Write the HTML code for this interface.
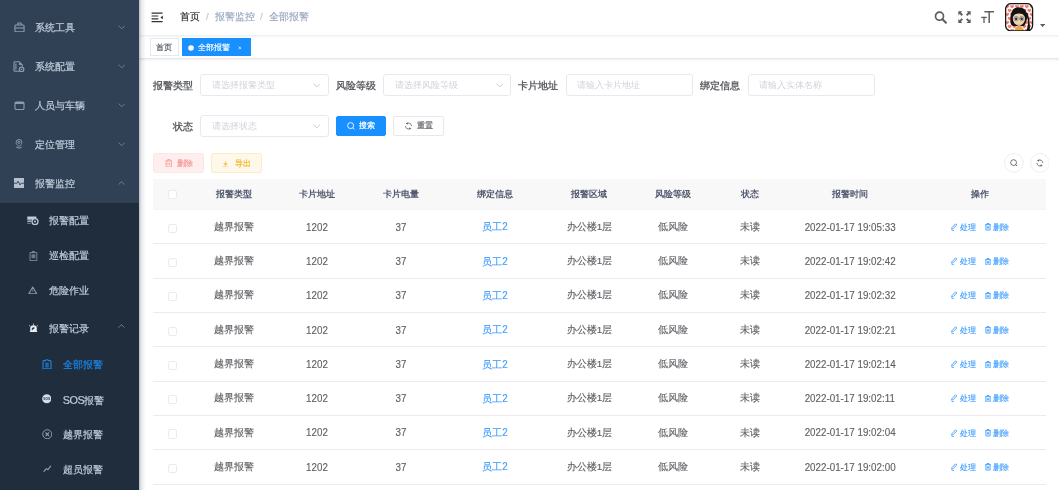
<!DOCTYPE html>
<html><head><meta charset="utf-8">
<style>
*{box-sizing:border-box;margin:0;padding:0}
html,body{width:1059px;height:490px;overflow:hidden;background:#fff;font-family:"Liberation Sans",sans-serif;}
.abs{position:absolute}
#side{position:absolute;left:0;top:0;width:139px;height:490px;background:#304156;overflow:hidden;z-index:5}
#sub{position:absolute;left:0;top:202.6px;width:139px;height:300px;background:#1f2d3d}
.mi{position:absolute;font-size:9.8px;line-height:12px;white-space:nowrap;-webkit-text-stroke:0.2px currentColor}
#shadow{position:absolute;left:139px;top:0;width:7px;height:490px;background:linear-gradient(to right,rgba(0,21,41,.28),rgba(0,21,41,.08) 40%,rgba(0,21,41,0));z-index:6}
#nav{position:absolute;left:139px;top:0;width:920px;height:35px;background:#fff;box-shadow:0 1.2px 2.5px rgba(0,21,41,.09);z-index:2}
.bc{position:absolute;top:11px;font-size:9.8px;line-height:12px;white-space:nowrap;-webkit-text-stroke:0.15px currentColor}
#tags{z-index:1;position:absolute;left:139px;top:35px;width:920px;height:23.8px;background:#fff;border-bottom:1px solid #e4e7ed;box-shadow:0 1px 2px 0 rgba(0,0,0,.08)}
.tag{position:absolute;top:2.8px;height:18px;border:1px solid #e6e9ef;font-size:8.4px;line-height:16px;color:#495060;background:#fff;white-space:nowrap;-webkit-text-stroke:0.15px currentColor}
.tag.act{background:#1890ff;border-color:#1890ff;color:#fff}
.lbl{position:absolute;font-size:9.8px;font-weight:bold;color:#606266;line-height:12px;white-space:nowrap}
.inp{position:absolute;height:22px;border:1px solid #e7e9ee;border-radius:3px;background:#fff}
.ph{position:absolute;left:10.5px;top:5.4px;font-size:9.1px;line-height:11px;color:#cfd2d8;white-space:nowrap}
.btn{position:absolute;height:19.5px;border-radius:2px;font-size:8.4px;line-height:17.5px;white-space:nowrap;border:1px solid;-webkit-text-stroke:0.2px currentColor}
table{position:absolute;left:153.4px;top:179px;border-collapse:collapse;table-layout:fixed;width:892.5px}
td,th{text-align:center;white-space:nowrap;padding:0}
th{height:30.7px;background:#f8f8f9;color:#515a6e;font-size:9px;font-weight:bold;border-bottom:1px solid #f3f4f7}
td{height:34.3px;padding-top:1px;color:#606266;font-size:9.8px;border-bottom:1px solid #ebebef;-webkit-text-stroke:0.15px currentColor}
.cb{display:inline-block;width:9.2px;height:9.2px;border:1px solid #eaebee;border-radius:2px;background:#fff;vertical-align:middle}
.lnk{color:#409eff}
.n{display:inline-block;font-size:10.8px;transform:scaleX(0.907);position:relative;top:-0.7px}
.op{color:#409eff;font-size:8.4px}
body>*{filter:blur(0.3px)}
</style></head><body>
<div id="side">
<div id="sub"></div>
<div class="mi" style="top:21.6px;left:35.2px;color:#bfcbd9">系统工具</div>
<div class="mi" style="top:60.8px;left:35.2px;color:#bfcbd9">系统配置</div>
<div class="mi" style="top:100px;left:35.2px;color:#bfcbd9">人员与车辆</div>
<div class="mi" style="top:139.2px;left:35.2px;color:#bfcbd9">定位管理</div>
<div class="mi" style="top:178.4px;left:35.2px;color:#bfcbd9">报警监控</div>
<div class="mi" style="top:215.3px;left:49.3px;color:#bfcbd9">报警配置</div>
<div class="mi" style="top:250.3px;left:49.3px;color:#bfcbd9">巡检配置</div>
<div class="mi" style="top:285.3px;left:49.3px;color:#bfcbd9">危险作业</div>
<div class="mi" style="top:322.6px;left:49.3px;color:#bfcbd9">报警记录</div>
<div class="mi" style="top:359.4px;left:62.8px;color:#1c84e6">全部报警</div>
<div class="mi" style="top:394.4px;left:62.8px;color:#bfcbd9"><span style="font-size:10.9px;letter-spacing:-0.55px;vertical-align:-0.3px">SOS</span>报警</div>
<div class="mi" style="top:429.4px;left:62.8px;color:#bfcbd9">越界报警</div>
<div class="mi" style="top:464.4px;left:62.8px;color:#bfcbd9">超员报警</div>
<svg class="abs" style="left:13.5px;top:21.5px" width="11" height="10.5" viewBox="0 0 11 10.5" ><g fill="none" stroke="#8f9bad" stroke-width="1.1"><path d="M3.8 3V1.6Q3.8 1 4.4 1H6.6Q7.2 1 7.2 1.6V3"/><rect x="0.9" y="3" width="9.2" height="6.7" rx="1"/><path d="M0.9 6H10.1"/></g></svg>
<svg class="abs" style="left:13px;top:60.5px" width="11.5" height="11" viewBox="0 0 11.5 11" ><g fill="none" stroke="#8f9bad" stroke-width="1.1"><path d="M6.8 10.3H2Q1 10.3 1 9.3V1.7Q1 0.8 2 0.8H6.2L9.3 3.9V5.5"/><path d="M2.9 2.5V8.7"/></g><path d="M6.2 0.8L9.3 3.9H6.2Z" fill="#8f9bad"/><circle cx="8.6" cy="8.4" r="2.2" fill="none" stroke="#8f9bad" stroke-width="1.3"/><circle cx="8.6" cy="8.4" r="0.7" fill="#8f9bad"/></svg>
<svg class="abs" style="left:13.5px;top:100.7px" width="11" height="9.5" viewBox="0 0 11 9.5" ><rect x="1" y="1" width="9" height="7.6" rx="1.3" fill="none" stroke="#8f9bad" stroke-width="1.1"/><rect x="1" y="1" width="9" height="2" fill="#8f9bad"/></svg>
<svg class="abs" style="left:15px;top:139.2px" width="8" height="10" viewBox="0 0 8 10" ><g fill="none" stroke="#8f9bad" stroke-width="1"><path d="M4 7.6C2.4 6 1.1 4.9 1.1 3.4A2.9 2.9 0 0 1 6.9 3.4C6.9 4.9 5.6 6 4 7.6Z"/><circle cx="4" cy="3.4" r="1"/><path d="M1.3 7.6Q1 9 4 9Q7 9 6.7 7.6"/></g></svg>
<svg class="abs" style="left:13.9px;top:178.4px" width="10" height="10" viewBox="0 0 10 10" ><rect x="0" y="0" width="10" height="10" fill="#b6bfcc"/><path d="M0 5.2H3L4.2 3.2L6 7L7.2 5.2H10" fill="none" stroke="#304156" stroke-width="0.9"/></svg>
<svg class="abs" style="left:27.2px;top:215.5px" width="11.5" height="9.5" viewBox="0 0 11.5 9.5" ><rect x="0.3" y="0.5" width="9" height="3.2" fill="#bfcbd9"/><rect x="0.3" y="4.5" width="4" height="1.3" fill="#bfcbd9"/><rect x="0.3" y="6.8" width="3.5" height="1" fill="#bfcbd9" opacity=".6"/><circle cx="8" cy="5.6" r="3" fill="#1f2d3d" stroke="#bfcbd9" stroke-width="1.3"/><circle cx="8" cy="5.6" r="1" fill="#bfcbd9"/></svg>
<svg class="abs" style="left:28.5px;top:249.5px" width="9" height="11.5" viewBox="0 0 9 11.5" ><path d="M1 2.6H7.8V10.6H1Z" fill="none" stroke="#8f9bad" stroke-width="1" opacity=".8"/><path d="M2.7 2.6Q2.7 0.8 4.4 0.8Q6.1 0.8 6.1 2.6Z" fill="#8f9bad" opacity=".8"/><rect x="2.5" y="4.3" width="3.8" height="4" rx="1" fill="#8f9bad" opacity=".7"/></svg>
<svg class="abs" style="left:28px;top:285.8px" width="9.5" height="8.5" viewBox="0 0 9.5 8.5" ><path d="M4.75 1L8.7 7.7H0.8Z" fill="none" stroke="#8f9bad" stroke-width="1.1" stroke-linejoin="round"/><path d="M4.75 3.6V5.6" stroke="#8f9bad" stroke-width="0.8"/></svg>
<svg class="abs" style="left:28.5px;top:322.8px" width="9" height="9.5" viewBox="0 0 9 9.5" ><path d="M1 3.5L0.3 2.2M8 3.5L8.7 2.2M4.5 2.2V0.6" stroke="#bfcbd9" stroke-width="0.9"/><path d="M1.2 9V5.5A3.3 3.3 0 0 1 7.8 5.5V9Z" fill="#e8edf3"/><path d="M3 7.2V5.6A1.6 1.6 0 0 1 5.8 5" fill="#1f2d3d" stroke="#1f2d3d" stroke-width=".3"/><rect x="0.8" y="8.2" width="7.4" height="1.2" fill="#e8edf3"/></svg>
<svg class="abs" style="left:41.5px;top:358.5px" width="10" height="10.5" viewBox="0 0 10 10.5" ><path d="M1 2.4Q1 1.6 1.8 1.6H3.4Q3.6 0.7 5 0.7Q6.4 0.7 6.6 1.6H8.2Q9 1.6 9 2.4V9.8H1Z" fill="none" stroke="#1c84e6" stroke-width="1.1"/><rect x="3.3" y="3.8" width="3.4" height="4.5" fill="#1c84e6" opacity=".9"/><path d="M3.3 5.3H6.7M3.3 6.8H6.7" stroke="#1f2d3d" stroke-width=".45"/></svg>
<svg class="abs" style="left:41.8px;top:394.2px" width="9.5" height="9.5" viewBox="0 0 9.5 9.5" ><circle cx="4.75" cy="4.75" r="4.6" fill="#d4dde8"/><text x="4.75" y="5.9" font-size="3.3" font-weight="bold" text-anchor="middle" fill="#1f2d3d" font-family="Liberation Sans">SOS</text></svg>
<svg class="abs" style="left:41.5px;top:428.8px" width="10.5" height="10.5" viewBox="0 0 10.5 10.5" ><circle cx="5.25" cy="5.25" r="4.5" fill="none" stroke="#8f9bad" stroke-width="1"/><path d="M3.5 3.5L7 7M7 3.5L3.5 7" stroke="#8f9bad" stroke-width="1.1"/></svg>
<svg class="abs" style="left:42.5px;top:464.8px" width="9" height="7.5" viewBox="0 0 9 7.5" ><path d="M1 6.3L3.3 3.7L5 4.6L7.6 1.2" fill="none" stroke="#8f9bad" stroke-width="1.2" stroke-linecap="round" stroke-linejoin="round"/></svg>
<svg class="abs" style="left:117.5px;top:24.6px" width="7.5" height="4.8" viewBox="0 0 7.5 4.8" ><path d="M0.6 0.6L3.75 3.8L6.9 0.6" fill="none" stroke="#6f7c90" stroke-width="1"/></svg>
<svg class="abs" style="left:117.5px;top:63.8px" width="7.5" height="4.8" viewBox="0 0 7.5 4.8" ><path d="M0.6 0.6L3.75 3.8L6.9 0.6" fill="none" stroke="#6f7c90" stroke-width="1"/></svg>
<svg class="abs" style="left:117.5px;top:103px" width="7.5" height="4.8" viewBox="0 0 7.5 4.8" ><path d="M0.6 0.6L3.75 3.8L6.9 0.6" fill="none" stroke="#6f7c90" stroke-width="1"/></svg>
<svg class="abs" style="left:117.5px;top:142.2px" width="7.5" height="4.8" viewBox="0 0 7.5 4.8" ><path d="M0.6 0.6L3.75 3.8L6.9 0.6" fill="none" stroke="#6f7c90" stroke-width="1"/></svg>
<svg class="abs" style="left:118px;top:180.5px" width="7" height="4.6" viewBox="0 0 7 4.6" ><path d="M0.6 3.6L3.5 0.6L6.4 3.6" fill="none" stroke="#6f7c90" stroke-width="1"/></svg>
<svg class="abs" style="left:118px;top:324.3px" width="7" height="4.6" viewBox="0 0 7 4.6" ><path d="M0.6 3.6L3.5 0.6L6.4 3.6" fill="none" stroke="#6f7c90" stroke-width="1"/></svg>
</div>
<div id="shadow"></div>
<div id="nav">
  <div class="bc" style="left:40.7px;color:#303133">首页</div>
  <div class="bc" style="left:67px;color:#c0c4cc">/</div>
  <div class="bc" style="left:75.7px;color:#97a8be">报警监控</div>
  <div class="bc" style="left:121px;color:#c0c4cc">/</div>
  <div class="bc" style="left:130px;color:#97a8be">全部报警</div>
</div>
<div id="tags">
  <div class="tag" style="left:11px;width:29.2px;padding-left:5px">首页</div>
  <div class="tag act" style="left:43.4px;width:69px;padding-left:15px">全部报警</div>
</div>
<div style="position:absolute;left:0;top:0;width:1059px;height:60px;z-index:3"><svg class="abs" style="left:151px;top:11.5px" width="12.5" height="11" viewBox="0 0 12.5 11" ><g stroke="#303133" stroke-width="1.2"><path d="M0.6 1.2H11.6M0.6 4H7.3M0.6 6.8H7.3M0.6 9.7H11.6"/></g><path d="M11.8 3.5V7.3L9.4 5.4Z" fill="#303133"/></svg>
<svg class="abs" style="left:933.5px;top:11.2px" width="13" height="13" viewBox="0 0 13 13" ><circle cx="5.5" cy="5.2" r="4" fill="none" stroke="#5a5e66" stroke-width="1.7"/><path d="M8.5 8.3L11.9 11.7" stroke="#5a5e66" stroke-width="2" stroke-linecap="round"/></svg>
<svg class="abs" style="left:957.8px;top:11px" width="13" height="12.2" viewBox="0 0 13 12.2" ><g fill="#5a5e66"><path d="M0.3 0.3H4.3L3 1.6L5 3.6L3.6 5L1.6 3L0.3 4.3Z"/><path d="M12.7 0.3H8.7L10 1.6L8 3.6L9.4 5L11.4 3L12.7 4.3Z"/><path d="M0.3 11.9H4.3L3 10.6L5 8.6L3.6 7.2L1.6 9.2L0.3 7.9Z"/><path d="M12.7 11.9H8.7L10 10.6L8 8.6L9.4 7.2L11.4 9.2L12.7 7.9Z"/></g></svg>
<svg class="abs" style="left:981.2px;top:11px" width="13.2" height="12.2" viewBox="0 0 13.2 12.2" ><g fill="#5a5e66"><rect x="3.4" y="0" width="9.6" height="1.5"/><rect x="7.45" y="0" width="1.5" height="12"/><rect x="0.2" y="5.8" width="5.6" height="1.3"/><rect x="2.35" y="5.8" width="1.3" height="6.2"/></g></svg>
<svg class="abs" style="left:1040.3px;top:23.5px" width="5.2" height="3.4" viewBox="0 0 5.2 3.4" ><path d="M0 0H5.2L2.6 3.2Z" fill="#5a5e66"/></svg>
<svg class="abs" style="left:1005.4px;top:2.6px" width="28.2" height="28.6" viewBox="0 0 28.2 28.6" ><defs><clipPath id="av"><rect x="0.6" y="0.6" width="27" height="27.4" rx="5.5"/></clipPath></defs>
<g clip-path="url(#av)"><rect width="28.2" height="28.6" fill="#fbf7f5"/><path transform="translate(2.20 3.20) scale(0.72)" d="M0 -0.8C-0.6 -2.2 -2.6 -2.2 -2.6 -0.4C-2.6 0.9 -1.1 1.8 0 2.7C1.1 1.8 2.6 0.9 2.6 -0.4C2.6 -2.2 0.6 -2.2 0 -0.8Z" fill="#f07468"/><path transform="translate(7.10 3.20) scale(0.72)" d="M0 -0.8C-0.6 -2.2 -2.6 -2.2 -2.6 -0.4C-2.6 0.9 -1.1 1.8 0 2.7C1.1 1.8 2.6 0.9 2.6 -0.4C2.6 -2.2 0.6 -2.2 0 -0.8Z" fill="#f07468"/><path transform="translate(12.00 3.20) scale(0.72)" d="M0 -0.8C-0.6 -2.2 -2.6 -2.2 -2.6 -0.4C-2.6 0.9 -1.1 1.8 0 2.7C1.1 1.8 2.6 0.9 2.6 -0.4C2.6 -2.2 0.6 -2.2 0 -0.8Z" fill="#f07468"/><path transform="translate(16.90 3.20) scale(0.72)" d="M0 -0.8C-0.6 -2.2 -2.6 -2.2 -2.6 -0.4C-2.6 0.9 -1.1 1.8 0 2.7C1.1 1.8 2.6 0.9 2.6 -0.4C2.6 -2.2 0.6 -2.2 0 -0.8Z" fill="#f07468"/><path transform="translate(21.80 3.20) scale(0.72)" d="M0 -0.8C-0.6 -2.2 -2.6 -2.2 -2.6 -0.4C-2.6 0.9 -1.1 1.8 0 2.7C1.1 1.8 2.6 0.9 2.6 -0.4C2.6 -2.2 0.6 -2.2 0 -0.8Z" fill="#f07468"/><path transform="translate(26.70 3.20) scale(0.72)" d="M0 -0.8C-0.6 -2.2 -2.6 -2.2 -2.6 -0.4C-2.6 0.9 -1.1 1.8 0 2.7C1.1 1.8 2.6 0.9 2.6 -0.4C2.6 -2.2 0.6 -2.2 0 -0.8Z" fill="#f07468"/><path transform="translate(31.60 3.20) scale(0.72)" d="M0 -0.8C-0.6 -2.2 -2.6 -2.2 -2.6 -0.4C-2.6 0.9 -1.1 1.8 0 2.7C1.1 1.8 2.6 0.9 2.6 -0.4C2.6 -2.2 0.6 -2.2 0 -0.8Z" fill="#f07468"/><path transform="translate(4.65 7.20) scale(0.72)" d="M0 -0.8C-0.6 -2.2 -2.6 -2.2 -2.6 -0.4C-2.6 0.9 -1.1 1.8 0 2.7C1.1 1.8 2.6 0.9 2.6 -0.4C2.6 -2.2 0.6 -2.2 0 -0.8Z" fill="#f07468"/><path transform="translate(9.55 7.20) scale(0.72)" d="M0 -0.8C-0.6 -2.2 -2.6 -2.2 -2.6 -0.4C-2.6 0.9 -1.1 1.8 0 2.7C1.1 1.8 2.6 0.9 2.6 -0.4C2.6 -2.2 0.6 -2.2 0 -0.8Z" fill="#f07468"/><path transform="translate(14.45 7.20) scale(0.72)" d="M0 -0.8C-0.6 -2.2 -2.6 -2.2 -2.6 -0.4C-2.6 0.9 -1.1 1.8 0 2.7C1.1 1.8 2.6 0.9 2.6 -0.4C2.6 -2.2 0.6 -2.2 0 -0.8Z" fill="#f07468"/><path transform="translate(19.35 7.20) scale(0.72)" d="M0 -0.8C-0.6 -2.2 -2.6 -2.2 -2.6 -0.4C-2.6 0.9 -1.1 1.8 0 2.7C1.1 1.8 2.6 0.9 2.6 -0.4C2.6 -2.2 0.6 -2.2 0 -0.8Z" fill="#f07468"/><path transform="translate(24.25 7.20) scale(0.72)" d="M0 -0.8C-0.6 -2.2 -2.6 -2.2 -2.6 -0.4C-2.6 0.9 -1.1 1.8 0 2.7C1.1 1.8 2.6 0.9 2.6 -0.4C2.6 -2.2 0.6 -2.2 0 -0.8Z" fill="#f07468"/><path transform="translate(29.15 7.20) scale(0.72)" d="M0 -0.8C-0.6 -2.2 -2.6 -2.2 -2.6 -0.4C-2.6 0.9 -1.1 1.8 0 2.7C1.1 1.8 2.6 0.9 2.6 -0.4C2.6 -2.2 0.6 -2.2 0 -0.8Z" fill="#f07468"/><path transform="translate(34.05 7.20) scale(0.72)" d="M0 -0.8C-0.6 -2.2 -2.6 -2.2 -2.6 -0.4C-2.6 0.9 -1.1 1.8 0 2.7C1.1 1.8 2.6 0.9 2.6 -0.4C2.6 -2.2 0.6 -2.2 0 -0.8Z" fill="#f07468"/><path transform="translate(2.20 11.20) scale(0.72)" d="M0 -0.8C-0.6 -2.2 -2.6 -2.2 -2.6 -0.4C-2.6 0.9 -1.1 1.8 0 2.7C1.1 1.8 2.6 0.9 2.6 -0.4C2.6 -2.2 0.6 -2.2 0 -0.8Z" fill="#f07468"/><path transform="translate(7.10 11.20) scale(0.72)" d="M0 -0.8C-0.6 -2.2 -2.6 -2.2 -2.6 -0.4C-2.6 0.9 -1.1 1.8 0 2.7C1.1 1.8 2.6 0.9 2.6 -0.4C2.6 -2.2 0.6 -2.2 0 -0.8Z" fill="#f07468"/><path transform="translate(12.00 11.20) scale(0.72)" d="M0 -0.8C-0.6 -2.2 -2.6 -2.2 -2.6 -0.4C-2.6 0.9 -1.1 1.8 0 2.7C1.1 1.8 2.6 0.9 2.6 -0.4C2.6 -2.2 0.6 -2.2 0 -0.8Z" fill="#f07468"/><path transform="translate(16.90 11.20) scale(0.72)" d="M0 -0.8C-0.6 -2.2 -2.6 -2.2 -2.6 -0.4C-2.6 0.9 -1.1 1.8 0 2.7C1.1 1.8 2.6 0.9 2.6 -0.4C2.6 -2.2 0.6 -2.2 0 -0.8Z" fill="#f07468"/><path transform="translate(21.80 11.20) scale(0.72)" d="M0 -0.8C-0.6 -2.2 -2.6 -2.2 -2.6 -0.4C-2.6 0.9 -1.1 1.8 0 2.7C1.1 1.8 2.6 0.9 2.6 -0.4C2.6 -2.2 0.6 -2.2 0 -0.8Z" fill="#f07468"/><path transform="translate(26.70 11.20) scale(0.72)" d="M0 -0.8C-0.6 -2.2 -2.6 -2.2 -2.6 -0.4C-2.6 0.9 -1.1 1.8 0 2.7C1.1 1.8 2.6 0.9 2.6 -0.4C2.6 -2.2 0.6 -2.2 0 -0.8Z" fill="#f07468"/><path transform="translate(31.60 11.20) scale(0.72)" d="M0 -0.8C-0.6 -2.2 -2.6 -2.2 -2.6 -0.4C-2.6 0.9 -1.1 1.8 0 2.7C1.1 1.8 2.6 0.9 2.6 -0.4C2.6 -2.2 0.6 -2.2 0 -0.8Z" fill="#f07468"/><path transform="translate(4.65 15.20) scale(0.72)" d="M0 -0.8C-0.6 -2.2 -2.6 -2.2 -2.6 -0.4C-2.6 0.9 -1.1 1.8 0 2.7C1.1 1.8 2.6 0.9 2.6 -0.4C2.6 -2.2 0.6 -2.2 0 -0.8Z" fill="#f07468"/><path transform="translate(9.55 15.20) scale(0.72)" d="M0 -0.8C-0.6 -2.2 -2.6 -2.2 -2.6 -0.4C-2.6 0.9 -1.1 1.8 0 2.7C1.1 1.8 2.6 0.9 2.6 -0.4C2.6 -2.2 0.6 -2.2 0 -0.8Z" fill="#f07468"/><path transform="translate(14.45 15.20) scale(0.72)" d="M0 -0.8C-0.6 -2.2 -2.6 -2.2 -2.6 -0.4C-2.6 0.9 -1.1 1.8 0 2.7C1.1 1.8 2.6 0.9 2.6 -0.4C2.6 -2.2 0.6 -2.2 0 -0.8Z" fill="#f07468"/><path transform="translate(19.35 15.20) scale(0.72)" d="M0 -0.8C-0.6 -2.2 -2.6 -2.2 -2.6 -0.4C-2.6 0.9 -1.1 1.8 0 2.7C1.1 1.8 2.6 0.9 2.6 -0.4C2.6 -2.2 0.6 -2.2 0 -0.8Z" fill="#f07468"/><path transform="translate(24.25 15.20) scale(0.72)" d="M0 -0.8C-0.6 -2.2 -2.6 -2.2 -2.6 -0.4C-2.6 0.9 -1.1 1.8 0 2.7C1.1 1.8 2.6 0.9 2.6 -0.4C2.6 -2.2 0.6 -2.2 0 -0.8Z" fill="#f07468"/><path transform="translate(29.15 15.20) scale(0.72)" d="M0 -0.8C-0.6 -2.2 -2.6 -2.2 -2.6 -0.4C-2.6 0.9 -1.1 1.8 0 2.7C1.1 1.8 2.6 0.9 2.6 -0.4C2.6 -2.2 0.6 -2.2 0 -0.8Z" fill="#f07468"/><path transform="translate(34.05 15.20) scale(0.72)" d="M0 -0.8C-0.6 -2.2 -2.6 -2.2 -2.6 -0.4C-2.6 0.9 -1.1 1.8 0 2.7C1.1 1.8 2.6 0.9 2.6 -0.4C2.6 -2.2 0.6 -2.2 0 -0.8Z" fill="#f07468"/><path transform="translate(2.20 19.20) scale(0.72)" d="M0 -0.8C-0.6 -2.2 -2.6 -2.2 -2.6 -0.4C-2.6 0.9 -1.1 1.8 0 2.7C1.1 1.8 2.6 0.9 2.6 -0.4C2.6 -2.2 0.6 -2.2 0 -0.8Z" fill="#f07468"/><path transform="translate(7.10 19.20) scale(0.72)" d="M0 -0.8C-0.6 -2.2 -2.6 -2.2 -2.6 -0.4C-2.6 0.9 -1.1 1.8 0 2.7C1.1 1.8 2.6 0.9 2.6 -0.4C2.6 -2.2 0.6 -2.2 0 -0.8Z" fill="#f07468"/><path transform="translate(12.00 19.20) scale(0.72)" d="M0 -0.8C-0.6 -2.2 -2.6 -2.2 -2.6 -0.4C-2.6 0.9 -1.1 1.8 0 2.7C1.1 1.8 2.6 0.9 2.6 -0.4C2.6 -2.2 0.6 -2.2 0 -0.8Z" fill="#f07468"/><path transform="translate(16.90 19.20) scale(0.72)" d="M0 -0.8C-0.6 -2.2 -2.6 -2.2 -2.6 -0.4C-2.6 0.9 -1.1 1.8 0 2.7C1.1 1.8 2.6 0.9 2.6 -0.4C2.6 -2.2 0.6 -2.2 0 -0.8Z" fill="#f07468"/><path transform="translate(21.80 19.20) scale(0.72)" d="M0 -0.8C-0.6 -2.2 -2.6 -2.2 -2.6 -0.4C-2.6 0.9 -1.1 1.8 0 2.7C1.1 1.8 2.6 0.9 2.6 -0.4C2.6 -2.2 0.6 -2.2 0 -0.8Z" fill="#f07468"/><path transform="translate(26.70 19.20) scale(0.72)" d="M0 -0.8C-0.6 -2.2 -2.6 -2.2 -2.6 -0.4C-2.6 0.9 -1.1 1.8 0 2.7C1.1 1.8 2.6 0.9 2.6 -0.4C2.6 -2.2 0.6 -2.2 0 -0.8Z" fill="#f07468"/><path transform="translate(31.60 19.20) scale(0.72)" d="M0 -0.8C-0.6 -2.2 -2.6 -2.2 -2.6 -0.4C-2.6 0.9 -1.1 1.8 0 2.7C1.1 1.8 2.6 0.9 2.6 -0.4C2.6 -2.2 0.6 -2.2 0 -0.8Z" fill="#f07468"/><path transform="translate(4.65 23.20) scale(0.72)" d="M0 -0.8C-0.6 -2.2 -2.6 -2.2 -2.6 -0.4C-2.6 0.9 -1.1 1.8 0 2.7C1.1 1.8 2.6 0.9 2.6 -0.4C2.6 -2.2 0.6 -2.2 0 -0.8Z" fill="#f07468"/><path transform="translate(9.55 23.20) scale(0.72)" d="M0 -0.8C-0.6 -2.2 -2.6 -2.2 -2.6 -0.4C-2.6 0.9 -1.1 1.8 0 2.7C1.1 1.8 2.6 0.9 2.6 -0.4C2.6 -2.2 0.6 -2.2 0 -0.8Z" fill="#f07468"/><path transform="translate(14.45 23.20) scale(0.72)" d="M0 -0.8C-0.6 -2.2 -2.6 -2.2 -2.6 -0.4C-2.6 0.9 -1.1 1.8 0 2.7C1.1 1.8 2.6 0.9 2.6 -0.4C2.6 -2.2 0.6 -2.2 0 -0.8Z" fill="#f07468"/><path transform="translate(19.35 23.20) scale(0.72)" d="M0 -0.8C-0.6 -2.2 -2.6 -2.2 -2.6 -0.4C-2.6 0.9 -1.1 1.8 0 2.7C1.1 1.8 2.6 0.9 2.6 -0.4C2.6 -2.2 0.6 -2.2 0 -0.8Z" fill="#f07468"/><path transform="translate(24.25 23.20) scale(0.72)" d="M0 -0.8C-0.6 -2.2 -2.6 -2.2 -2.6 -0.4C-2.6 0.9 -1.1 1.8 0 2.7C1.1 1.8 2.6 0.9 2.6 -0.4C2.6 -2.2 0.6 -2.2 0 -0.8Z" fill="#f07468"/><path transform="translate(29.15 23.20) scale(0.72)" d="M0 -0.8C-0.6 -2.2 -2.6 -2.2 -2.6 -0.4C-2.6 0.9 -1.1 1.8 0 2.7C1.1 1.8 2.6 0.9 2.6 -0.4C2.6 -2.2 0.6 -2.2 0 -0.8Z" fill="#f07468"/><path transform="translate(34.05 23.20) scale(0.72)" d="M0 -0.8C-0.6 -2.2 -2.6 -2.2 -2.6 -0.4C-2.6 0.9 -1.1 1.8 0 2.7C1.1 1.8 2.6 0.9 2.6 -0.4C2.6 -2.2 0.6 -2.2 0 -0.8Z" fill="#f07468"/><path transform="translate(2.20 27.20) scale(0.72)" d="M0 -0.8C-0.6 -2.2 -2.6 -2.2 -2.6 -0.4C-2.6 0.9 -1.1 1.8 0 2.7C1.1 1.8 2.6 0.9 2.6 -0.4C2.6 -2.2 0.6 -2.2 0 -0.8Z" fill="#f07468"/><path transform="translate(7.10 27.20) scale(0.72)" d="M0 -0.8C-0.6 -2.2 -2.6 -2.2 -2.6 -0.4C-2.6 0.9 -1.1 1.8 0 2.7C1.1 1.8 2.6 0.9 2.6 -0.4C2.6 -2.2 0.6 -2.2 0 -0.8Z" fill="#f07468"/><path transform="translate(12.00 27.20) scale(0.72)" d="M0 -0.8C-0.6 -2.2 -2.6 -2.2 -2.6 -0.4C-2.6 0.9 -1.1 1.8 0 2.7C1.1 1.8 2.6 0.9 2.6 -0.4C2.6 -2.2 0.6 -2.2 0 -0.8Z" fill="#f07468"/><path transform="translate(16.90 27.20) scale(0.72)" d="M0 -0.8C-0.6 -2.2 -2.6 -2.2 -2.6 -0.4C-2.6 0.9 -1.1 1.8 0 2.7C1.1 1.8 2.6 0.9 2.6 -0.4C2.6 -2.2 0.6 -2.2 0 -0.8Z" fill="#f07468"/><path transform="translate(21.80 27.20) scale(0.72)" d="M0 -0.8C-0.6 -2.2 -2.6 -2.2 -2.6 -0.4C-2.6 0.9 -1.1 1.8 0 2.7C1.1 1.8 2.6 0.9 2.6 -0.4C2.6 -2.2 0.6 -2.2 0 -0.8Z" fill="#f07468"/><path transform="translate(26.70 27.20) scale(0.72)" d="M0 -0.8C-0.6 -2.2 -2.6 -2.2 -2.6 -0.4C-2.6 0.9 -1.1 1.8 0 2.7C1.1 1.8 2.6 0.9 2.6 -0.4C2.6 -2.2 0.6 -2.2 0 -0.8Z" fill="#f07468"/><path transform="translate(31.60 27.20) scale(0.72)" d="M0 -0.8C-0.6 -2.2 -2.6 -2.2 -2.6 -0.4C-2.6 0.9 -1.1 1.8 0 2.7C1.1 1.8 2.6 0.9 2.6 -0.4C2.6 -2.2 0.6 -2.2 0 -0.8Z" fill="#f07468"/><path transform="translate(4.65 31.20) scale(0.72)" d="M0 -0.8C-0.6 -2.2 -2.6 -2.2 -2.6 -0.4C-2.6 0.9 -1.1 1.8 0 2.7C1.1 1.8 2.6 0.9 2.6 -0.4C2.6 -2.2 0.6 -2.2 0 -0.8Z" fill="#f07468"/><path transform="translate(9.55 31.20) scale(0.72)" d="M0 -0.8C-0.6 -2.2 -2.6 -2.2 -2.6 -0.4C-2.6 0.9 -1.1 1.8 0 2.7C1.1 1.8 2.6 0.9 2.6 -0.4C2.6 -2.2 0.6 -2.2 0 -0.8Z" fill="#f07468"/><path transform="translate(14.45 31.20) scale(0.72)" d="M0 -0.8C-0.6 -2.2 -2.6 -2.2 -2.6 -0.4C-2.6 0.9 -1.1 1.8 0 2.7C1.1 1.8 2.6 0.9 2.6 -0.4C2.6 -2.2 0.6 -2.2 0 -0.8Z" fill="#f07468"/><path transform="translate(19.35 31.20) scale(0.72)" d="M0 -0.8C-0.6 -2.2 -2.6 -2.2 -2.6 -0.4C-2.6 0.9 -1.1 1.8 0 2.7C1.1 1.8 2.6 0.9 2.6 -0.4C2.6 -2.2 0.6 -2.2 0 -0.8Z" fill="#f07468"/><path transform="translate(24.25 31.20) scale(0.72)" d="M0 -0.8C-0.6 -2.2 -2.6 -2.2 -2.6 -0.4C-2.6 0.9 -1.1 1.8 0 2.7C1.1 1.8 2.6 0.9 2.6 -0.4C2.6 -2.2 0.6 -2.2 0 -0.8Z" fill="#f07468"/><path transform="translate(29.15 31.20) scale(0.72)" d="M0 -0.8C-0.6 -2.2 -2.6 -2.2 -2.6 -0.4C-2.6 0.9 -1.1 1.8 0 2.7C1.1 1.8 2.6 0.9 2.6 -0.4C2.6 -2.2 0.6 -2.2 0 -0.8Z" fill="#f07468"/><path transform="translate(34.05 31.20) scale(0.72)" d="M0 -0.8C-0.6 -2.2 -2.6 -2.2 -2.6 -0.4C-2.6 0.9 -1.1 1.8 0 2.7C1.1 1.8 2.6 0.9 2.6 -0.4C2.6 -2.2 0.6 -2.2 0 -0.8Z" fill="#f07468"/>
<path d="M18.6 9Q23.5 13 23 21Q22.5 25.5 21 28.6H24.6Q25.8 18 22.5 10Z" fill="#141414"/>
<path d="M5.4 19Q4.6 4.2 13.8 4.2Q22.6 4.4 22.2 15Q21 21 19 23H8Q5.6 22 5.4 19Z" fill="#141414"/>
<ellipse cx="13.9" cy="16" rx="6.1" ry="6.3" fill="#f0d2ad"/>
<path d="M7.4 13Q8.6 7.6 14 7.6Q19.6 7.6 20.6 13Q17.5 10.4 13.6 10.6Q9.6 11 7.4 13Z" fill="#141414"/>
<circle cx="11.1" cy="15.6" r="2.2" fill="#d8d2ca" stroke="#6d6d6d" stroke-width=".6"/><circle cx="16.7" cy="15.6" r="2.2" fill="#d8d2ca" stroke="#6d6d6d" stroke-width=".6"/>
<circle cx="11.1" cy="15.7" r="1.2" fill="#2a2a2a"/><circle cx="16.7" cy="15.7" r="1.2" fill="#2a2a2a"/>
<path d="M12.6 21.6H15.4V23.6H12.6Z" fill="#dcb58e"/>
<path d="M9.6 28.6Q9.6 23.2 14 23.2Q18.6 23.2 18.6 28.6Z" fill="#e2ad44"/></g>
<rect x="0.6" y="0.6" width="27" height="27.4" rx="5.5" fill="none" stroke="#161616" stroke-width="1.3"/></svg>
<svg class="abs" style="left:188.3px;top:44.7px" width="6" height="6" viewBox="0 0 6 6" ><circle cx="3" cy="3" r="2.8" fill="#fff"/></svg>
<svg class="abs" style="left:237.6px;top:46.2px" width="3.8" height="3.8" viewBox="0 0 3.8 3.8" ><path d="M0.5 0.5L3.3 3.3M3.3 0.5L0.5 3.3" stroke="#fff" stroke-width="0.7"/></svg></div>

<div class="lbl" style="left:153.2px;top:79.6px">报警类型</div>
<div class="inp" style="left:200.4px;top:73.6px;width:128.2px"><span class="ph">请选择报警类型</span></div>
<div class="lbl" style="left:336px;top:79.6px">风险等级</div>
<div class="inp" style="left:383.3px;top:73.6px;width:127.5px"><span class="ph">请选择风险等级</span></div>
<div class="lbl" style="left:518.4px;top:79.6px">卡片地址</div>
<div class="inp" style="left:565.5px;top:73.6px;width:127.1px"><span class="ph">请输入卡片地址</span></div>
<div class="lbl" style="left:700.3px;top:79.6px">绑定信息</div>
<div class="inp" style="left:747.8px;top:73.6px;width:127.4px"><span class="ph">请输入实体名称</span></div>

<div class="lbl" style="left:172.9px;top:120.6px">状态</div>
<div class="inp" style="left:200.4px;top:114.6px;width:128.2px"><span class="ph">请选择状态</span></div>
<div class="btn" style="left:336px;top:116px;width:49.7px;background:#1890ff;border-color:#1890ff;color:#fff;padding-left:22px">搜索</div>
<div class="btn" style="left:393.2px;top:116.2px;width:50.5px;background:#fff;border-color:#e8e8eb;color:#606266;padding-left:22.5px">重置</div>

<div class="btn" style="left:153.2px;top:153.4px;width:50.8px;height:20px;background:#feeeee;border-color:#fde6e6;color:#f89898;padding-left:22.5px;line-height:19px">删除</div>
<div class="btn" style="left:210.6px;top:153.4px;width:51px;height:20px;background:#fef8ea;border-color:#fcedc8;color:#f6b52c;padding-left:23.8px;line-height:19px">导出</div>
<svg class="abs" style="left:313px;top:83.2px" width="7.6" height="5" viewBox="0 0 7.6 5" ><path d="M0.6 0.6L3.8 4L7.0 0.6" fill="none" stroke="#c0c4cc" stroke-width="0.9"/></svg>
<svg class="abs" style="left:495.5px;top:83.2px" width="7.6" height="5" viewBox="0 0 7.6 5" ><path d="M0.6 0.6L3.8 4L7.0 0.6" fill="none" stroke="#c0c4cc" stroke-width="0.9"/></svg>
<svg class="abs" style="left:313px;top:124.2px" width="7.6" height="5" viewBox="0 0 7.6 5" ><path d="M0.6 0.6L3.8 4L7.0 0.6" fill="none" stroke="#c0c4cc" stroke-width="0.9"/></svg>
<svg class="abs" style="left:346.5px;top:121.6px" width="8" height="8" viewBox="0 0 8 8" ><circle cx="3.6" cy="3.6" r="3" fill="none" stroke="#fff" stroke-width="0.9"/><path d="M5.8 5.8L7.4 7.4" stroke="#fff" stroke-width="0.9"/></svg>
<svg class="abs" style="left:404.8px;top:122px" width="7.2" height="8" viewBox="0 0 7.2 8" ><g fill="none" stroke="#606266" stroke-width="0.85"><path d="M6.5 4A3 3 0 0 0 2 1.4"/><path d="M0.5 4A3 3 0 0 0 5 6.6"/></g><path d="M0.6 1.2L2.9 0.4L2.6 2.8Z" fill="#606266"/><path d="M6.4 6.8L4.1 7.6L4.4 5.2Z" fill="#606266"/></svg>
<svg class="abs" style="left:164.8px;top:158.6px" width="7.6" height="8.6" viewBox="0 0 7.6 8.6" ><g fill="none" stroke="#f89c9c" stroke-width="0.9"><path d="M0.5 1.9H7.1"/><path d="M2.6 1.9V0.6H5V1.9"/><path d="M1.2 1.9V8H6.4V1.9"/><path d="M3 3.8V6.2M4.6 3.8V6.2"/></g></svg>
<svg class="abs" style="left:222.4px;top:160.5px" width="7" height="6.5" viewBox="0 0 7 6.5" ><g fill="none" stroke="#f6bf4a" stroke-width="0.9"><path d="M3.5 0.3V3.6"/><path d="M3.5 4.6L1.6 2.7H5.4Z" fill="#f6bf4a" stroke-width="0.5"/><path d="M0.8 6H6.2"/></g></svg>
<svg class="abs" style="left:1003.8px;top:153.2px" width="19.8" height="19.8" viewBox="0 0 19.8 19.8" ><circle cx="9.9" cy="9.9" r="9.4" fill="#fff" stroke="#e8eaef" stroke-width="0.8"/><circle cx="9.6" cy="9.6" r="2.9" fill="none" stroke="#606266" stroke-width="0.9"/><path d="M11.6 11.6L13 13" stroke="#606266" stroke-width="0.9"/></svg>
<svg class="abs" style="left:1029.6px;top:153.2px" width="19.8" height="19.8" viewBox="0 0 19.8 19.8" ><circle cx="9.9" cy="9.9" r="9.4" fill="#fff" stroke="#e8eaef" stroke-width="0.8"/><g transform="translate(6.4 6)"><g fill="none" stroke="#606266" stroke-width="0.85"><path d="M6.5 4A3 3 0 0 0 2 1.4"/><path d="M0.5 4A3 3 0 0 0 5 6.6"/></g><path d="M0.6 1.2L2.9 0.4L2.6 2.8Z" fill="#606266"/><path d="M6.4 6.8L4.1 7.6L4.4 5.2Z" fill="#606266"/></g></svg>

<table>
<colgroup><col style="width:38.5px"><col style="width:83.5px"><col style="width:84.2px"><col style="width:83.2px"><col style="width:104.4px"><col style="width:84.6px"><col style="width:82.6px"><col style="width:70.8px"><col style="width:129.6px"><col style="width:131.1px"></colgroup>
<tr><th><span class="cb"></span></th><th>报警类型</th><th>卡片地址</th><th>卡片电量</th><th>绑定信息</th><th>报警区域</th><th>风险等级</th><th>状态</th><th>报警时间</th><th>操作</th></tr>
<tr><td><span class="cb"></span></td><td>越界报警</td><td><span class="n">1202</span></td><td><span class="n">37</span></td><td><span class="lnk">员工<span class="n" style="top:0">2</span></span></td><td>办公楼1层</td><td>低风险</td><td>未读</td><td><span class="n">2022-01-17 19:05:33</span></td><td class="op"><svg width="6.5" height="8" viewBox="0 0 6.5 8" style="vertical-align:-1px;margin-right:2.5px"><path d="M4.6 0.8L5.8 2L2 5.8L0.6 6.2L0.9 4.7Z" fill="none" stroke="#409eff" stroke-width="0.9"/><path d="M0.6 7.5H3" stroke="#409eff" stroke-width="0.7"/></svg>处理<span style="display:inline-block;width:8.5px"></span><svg width="6" height="7.5" viewBox="0 0 6 7.5" style="vertical-align:-1px;margin-right:2.5px"><g fill="none" stroke="#409eff" stroke-width="0.9"><path d="M0.3 1.6H5.7"/><path d="M2 1.6V0.5H4V1.6"/><path d="M0.9 1.6V7H5.1V1.6"/><path d="M2.4 3.2V5.5M3.6 3.2V5.5"/></g></svg>删除</td></tr>
<tr><td><span class="cb"></span></td><td>越界报警</td><td><span class="n">1202</span></td><td><span class="n">37</span></td><td><span class="lnk">员工<span class="n" style="top:0">2</span></span></td><td>办公楼1层</td><td>低风险</td><td>未读</td><td><span class="n">2022-01-17 19:02:42</span></td><td class="op"><svg width="6.5" height="8" viewBox="0 0 6.5 8" style="vertical-align:-1px;margin-right:2.5px"><path d="M4.6 0.8L5.8 2L2 5.8L0.6 6.2L0.9 4.7Z" fill="none" stroke="#409eff" stroke-width="0.9"/><path d="M0.6 7.5H3" stroke="#409eff" stroke-width="0.7"/></svg>处理<span style="display:inline-block;width:8.5px"></span><svg width="6" height="7.5" viewBox="0 0 6 7.5" style="vertical-align:-1px;margin-right:2.5px"><g fill="none" stroke="#409eff" stroke-width="0.9"><path d="M0.3 1.6H5.7"/><path d="M2 1.6V0.5H4V1.6"/><path d="M0.9 1.6V7H5.1V1.6"/><path d="M2.4 3.2V5.5M3.6 3.2V5.5"/></g></svg>删除</td></tr>
<tr><td><span class="cb"></span></td><td>越界报警</td><td><span class="n">1202</span></td><td><span class="n">37</span></td><td><span class="lnk">员工<span class="n" style="top:0">2</span></span></td><td>办公楼1层</td><td>低风险</td><td>未读</td><td><span class="n">2022-01-17 19:02:32</span></td><td class="op"><svg width="6.5" height="8" viewBox="0 0 6.5 8" style="vertical-align:-1px;margin-right:2.5px"><path d="M4.6 0.8L5.8 2L2 5.8L0.6 6.2L0.9 4.7Z" fill="none" stroke="#409eff" stroke-width="0.9"/><path d="M0.6 7.5H3" stroke="#409eff" stroke-width="0.7"/></svg>处理<span style="display:inline-block;width:8.5px"></span><svg width="6" height="7.5" viewBox="0 0 6 7.5" style="vertical-align:-1px;margin-right:2.5px"><g fill="none" stroke="#409eff" stroke-width="0.9"><path d="M0.3 1.6H5.7"/><path d="M2 1.6V0.5H4V1.6"/><path d="M0.9 1.6V7H5.1V1.6"/><path d="M2.4 3.2V5.5M3.6 3.2V5.5"/></g></svg>删除</td></tr>
<tr><td><span class="cb"></span></td><td>越界报警</td><td><span class="n">1202</span></td><td><span class="n">37</span></td><td><span class="lnk">员工<span class="n" style="top:0">2</span></span></td><td>办公楼1层</td><td>低风险</td><td>未读</td><td><span class="n">2022-01-17 19:02:21</span></td><td class="op"><svg width="6.5" height="8" viewBox="0 0 6.5 8" style="vertical-align:-1px;margin-right:2.5px"><path d="M4.6 0.8L5.8 2L2 5.8L0.6 6.2L0.9 4.7Z" fill="none" stroke="#409eff" stroke-width="0.9"/><path d="M0.6 7.5H3" stroke="#409eff" stroke-width="0.7"/></svg>处理<span style="display:inline-block;width:8.5px"></span><svg width="6" height="7.5" viewBox="0 0 6 7.5" style="vertical-align:-1px;margin-right:2.5px"><g fill="none" stroke="#409eff" stroke-width="0.9"><path d="M0.3 1.6H5.7"/><path d="M2 1.6V0.5H4V1.6"/><path d="M0.9 1.6V7H5.1V1.6"/><path d="M2.4 3.2V5.5M3.6 3.2V5.5"/></g></svg>删除</td></tr>
<tr><td><span class="cb"></span></td><td>越界报警</td><td><span class="n">1202</span></td><td><span class="n">37</span></td><td><span class="lnk">员工<span class="n" style="top:0">2</span></span></td><td>办公楼1层</td><td>低风险</td><td>未读</td><td><span class="n">2022-01-17 19:02:14</span></td><td class="op"><svg width="6.5" height="8" viewBox="0 0 6.5 8" style="vertical-align:-1px;margin-right:2.5px"><path d="M4.6 0.8L5.8 2L2 5.8L0.6 6.2L0.9 4.7Z" fill="none" stroke="#409eff" stroke-width="0.9"/><path d="M0.6 7.5H3" stroke="#409eff" stroke-width="0.7"/></svg>处理<span style="display:inline-block;width:8.5px"></span><svg width="6" height="7.5" viewBox="0 0 6 7.5" style="vertical-align:-1px;margin-right:2.5px"><g fill="none" stroke="#409eff" stroke-width="0.9"><path d="M0.3 1.6H5.7"/><path d="M2 1.6V0.5H4V1.6"/><path d="M0.9 1.6V7H5.1V1.6"/><path d="M2.4 3.2V5.5M3.6 3.2V5.5"/></g></svg>删除</td></tr>
<tr><td><span class="cb"></span></td><td>越界报警</td><td><span class="n">1202</span></td><td><span class="n">37</span></td><td><span class="lnk">员工<span class="n" style="top:0">2</span></span></td><td>办公楼1层</td><td>低风险</td><td>未读</td><td><span class="n">2022-01-17 19:02:11</span></td><td class="op"><svg width="6.5" height="8" viewBox="0 0 6.5 8" style="vertical-align:-1px;margin-right:2.5px"><path d="M4.6 0.8L5.8 2L2 5.8L0.6 6.2L0.9 4.7Z" fill="none" stroke="#409eff" stroke-width="0.9"/><path d="M0.6 7.5H3" stroke="#409eff" stroke-width="0.7"/></svg>处理<span style="display:inline-block;width:8.5px"></span><svg width="6" height="7.5" viewBox="0 0 6 7.5" style="vertical-align:-1px;margin-right:2.5px"><g fill="none" stroke="#409eff" stroke-width="0.9"><path d="M0.3 1.6H5.7"/><path d="M2 1.6V0.5H4V1.6"/><path d="M0.9 1.6V7H5.1V1.6"/><path d="M2.4 3.2V5.5M3.6 3.2V5.5"/></g></svg>删除</td></tr>
<tr><td><span class="cb"></span></td><td>越界报警</td><td><span class="n">1202</span></td><td><span class="n">37</span></td><td><span class="lnk">员工<span class="n" style="top:0">2</span></span></td><td>办公楼1层</td><td>低风险</td><td>未读</td><td><span class="n">2022-01-17 19:02:04</span></td><td class="op"><svg width="6.5" height="8" viewBox="0 0 6.5 8" style="vertical-align:-1px;margin-right:2.5px"><path d="M4.6 0.8L5.8 2L2 5.8L0.6 6.2L0.9 4.7Z" fill="none" stroke="#409eff" stroke-width="0.9"/><path d="M0.6 7.5H3" stroke="#409eff" stroke-width="0.7"/></svg>处理<span style="display:inline-block;width:8.5px"></span><svg width="6" height="7.5" viewBox="0 0 6 7.5" style="vertical-align:-1px;margin-right:2.5px"><g fill="none" stroke="#409eff" stroke-width="0.9"><path d="M0.3 1.6H5.7"/><path d="M2 1.6V0.5H4V1.6"/><path d="M0.9 1.6V7H5.1V1.6"/><path d="M2.4 3.2V5.5M3.6 3.2V5.5"/></g></svg>删除</td></tr>
<tr><td><span class="cb"></span></td><td>越界报警</td><td><span class="n">1202</span></td><td><span class="n">37</span></td><td><span class="lnk">员工<span class="n" style="top:0">2</span></span></td><td>办公楼1层</td><td>低风险</td><td>未读</td><td><span class="n">2022-01-17 19:02:00</span></td><td class="op"><svg width="6.5" height="8" viewBox="0 0 6.5 8" style="vertical-align:-1px;margin-right:2.5px"><path d="M4.6 0.8L5.8 2L2 5.8L0.6 6.2L0.9 4.7Z" fill="none" stroke="#409eff" stroke-width="0.9"/><path d="M0.6 7.5H3" stroke="#409eff" stroke-width="0.7"/></svg>处理<span style="display:inline-block;width:8.5px"></span><svg width="6" height="7.5" viewBox="0 0 6 7.5" style="vertical-align:-1px;margin-right:2.5px"><g fill="none" stroke="#409eff" stroke-width="0.9"><path d="M0.3 1.6H5.7"/><path d="M2 1.6V0.5H4V1.6"/><path d="M0.9 1.6V7H5.1V1.6"/><path d="M2.4 3.2V5.5M3.6 3.2V5.5"/></g></svg>删除</td></tr>
</table>
</body></html>
